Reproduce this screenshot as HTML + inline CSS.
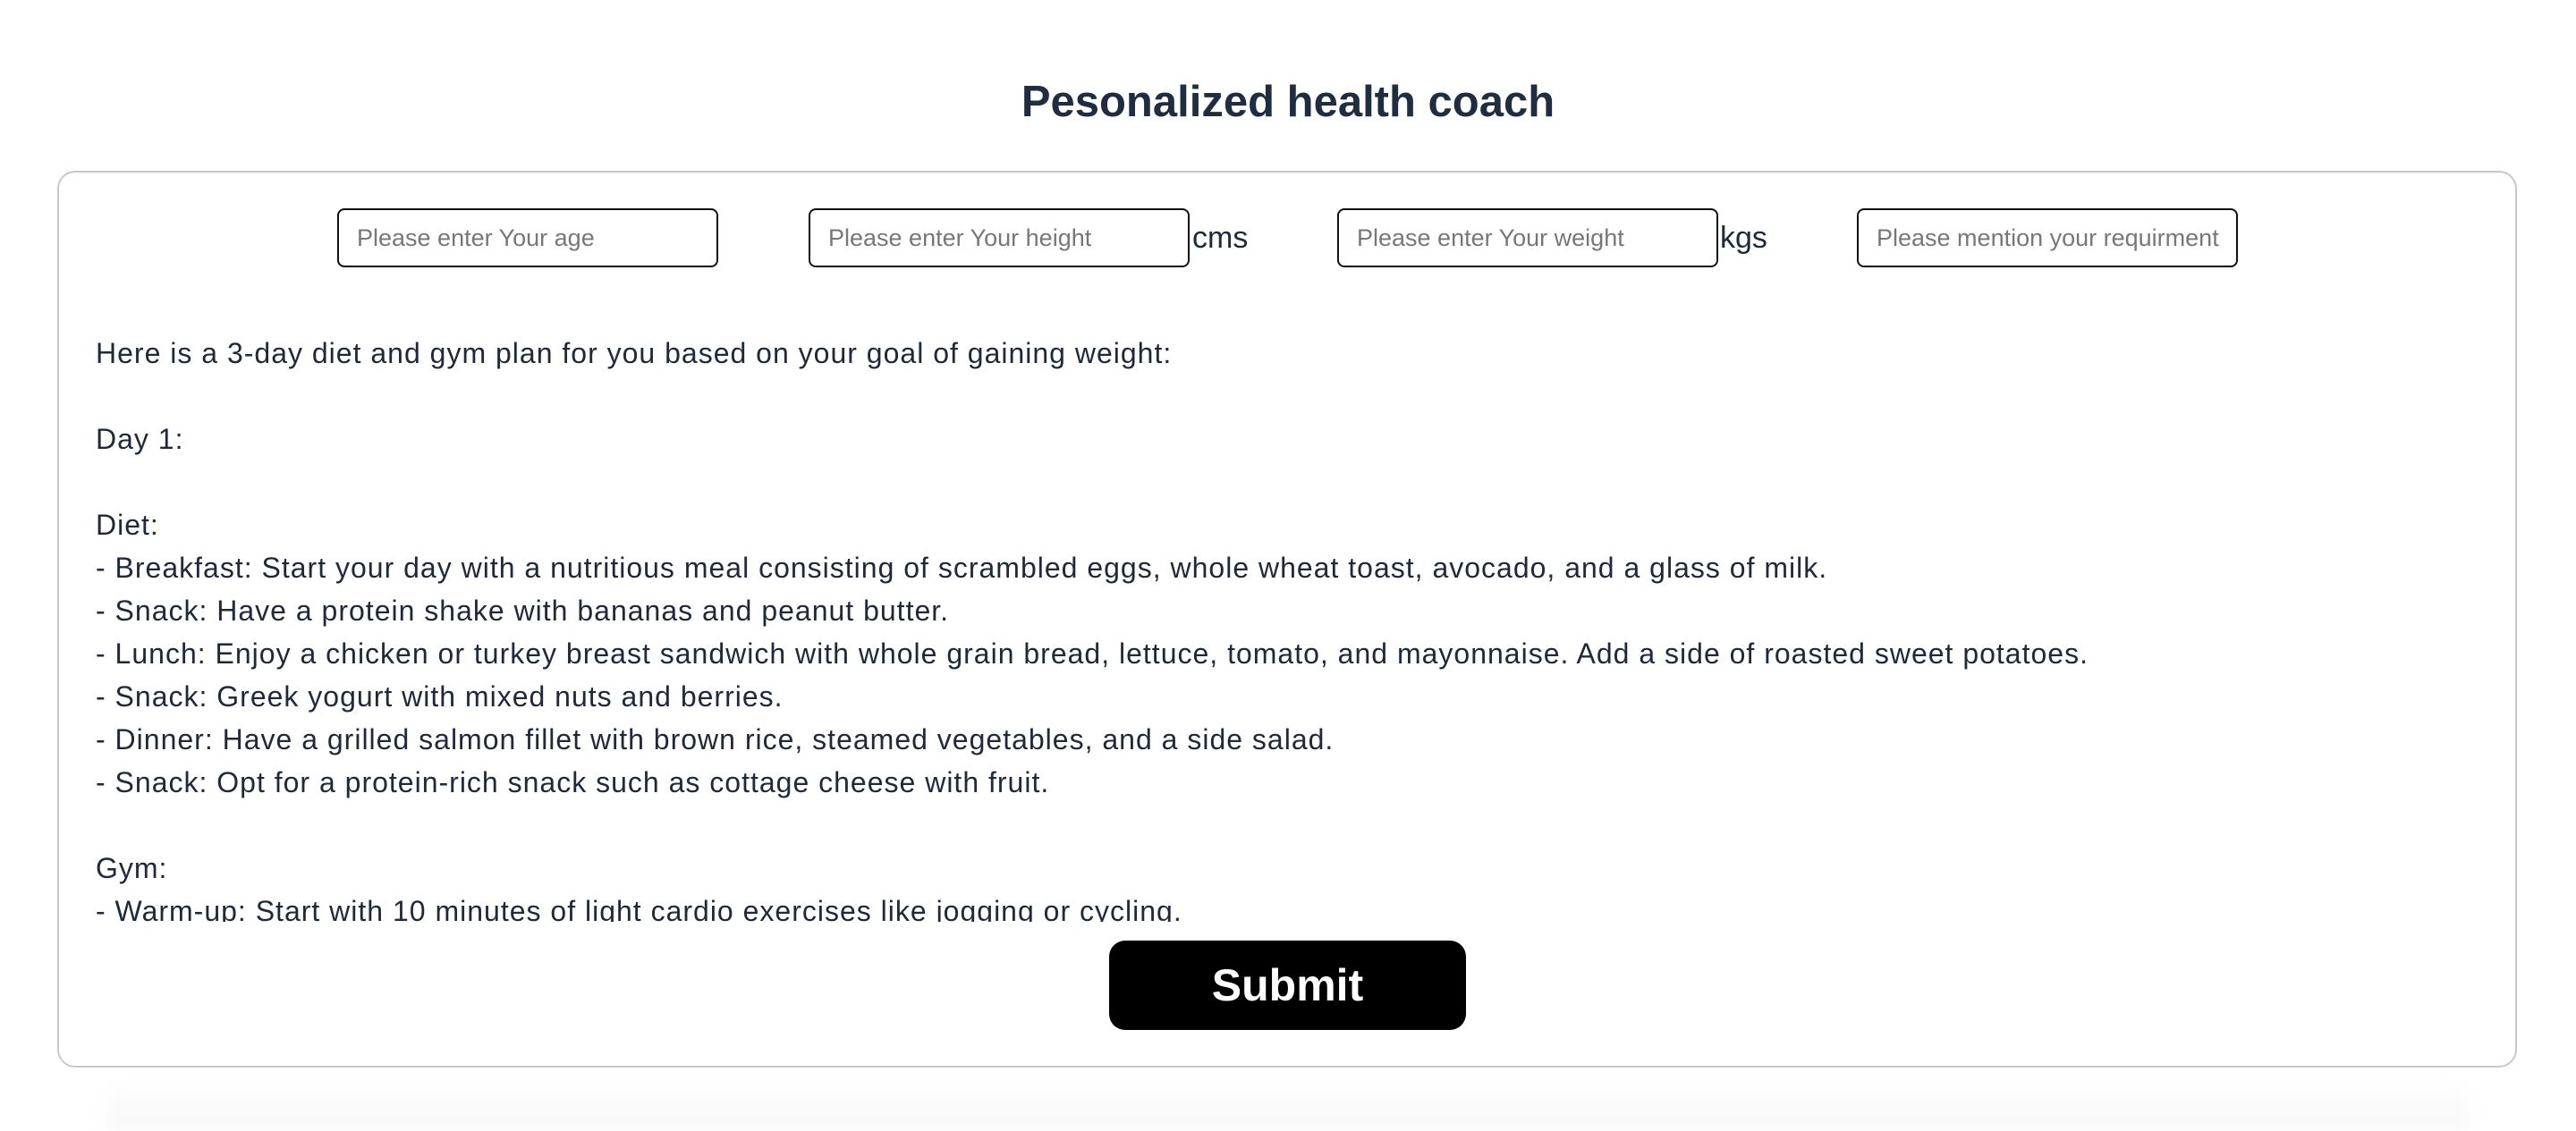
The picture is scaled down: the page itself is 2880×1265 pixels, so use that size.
<!DOCTYPE html>
<html><head><meta charset="utf-8"><style>
html,body{margin:0;padding:0;background:#fff;width:2880px;height:1252px;overflow:hidden;font-family:"Liberation Sans",sans-serif;}
h1{position:absolute;left:0;width:2880px;top:82px;margin:0;text-align:center;font-size:49px;font-weight:bold;color:#1e2d3f;line-height:64px;}
.shadow{position:absolute;left:120px;width:2640px;top:1205px;height:60px;background:linear-gradient(#fff,#f8f8f8);filter:blur(10px);}
.card{position:absolute;left:64px;top:191px;width:2746px;height:999px;border:2px solid #c8c8c8;border-radius:20px;background:#fff;}
.in{position:absolute;top:233px;height:62px;border:2px solid #111;border-radius:8px;font-size:27px;color:#777;line-height:62px;padding-left:20px;box-sizing:content-box;width:402px;}
.u{position:absolute;top:244px;font-size:34px;color:#1e293b;line-height:44px;}
.txt{position:absolute;left:107px;top:371px;width:2650px;height:660px;overflow:hidden;font-size:32px;line-height:48px;color:#1e293b;white-space:pre-line;letter-spacing:1px;}
.btn{position:absolute;left:1240px;top:1052px;width:399px;height:100px;background:#000;border-radius:18px;color:#fff;font-size:50px;font-weight:bold;text-align:center;line-height:100px;}
</style></head><body>
<h1>Pesonalized health coach</h1>
<div class="shadow"></div>
<div class="card"></div>
<div class="in" style="left:377px">Please enter Your age</div>
<div class="in" style="left:904px">Please enter Your height</div>
<div class="u" style="left:1333px">cms</div>
<div class="in" style="left:1495px">Please enter Your weight</div>
<div class="u" style="left:1923px">kgs</div>
<div class="in" style="left:2076px">Please mention your requirment</div>
<div class="txt">Here is a 3-day diet and gym plan for you based on your goal of gaining weight:

Day 1:

Diet:
- Breakfast: Start your day with a nutritious meal consisting of scrambled eggs, whole wheat toast, avocado, and a glass of milk.
- Snack: Have a protein shake with bananas and peanut butter.
- Lunch: Enjoy a chicken or turkey breast sandwich with whole grain bread, lettuce, tomato, and mayonnaise. Add a side of roasted sweet potatoes.
- Snack: Greek yogurt with mixed nuts and berries.
- Dinner: Have a grilled salmon fillet with brown rice, steamed vegetables, and a side salad.
- Snack: Opt for a protein-rich snack such as cottage cheese with fruit.

Gym:
- Warm-up: Start with 10 minutes of light cardio exercises like jogging or cycling.
- Strength training</div>
<div class="btn">Submit</div>
</body></html>
